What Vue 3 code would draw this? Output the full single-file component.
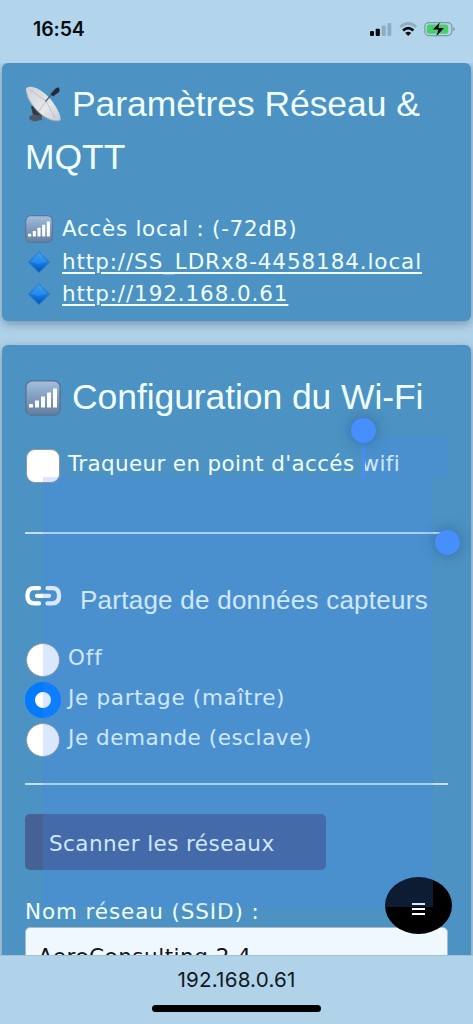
<script setup>
const links = ['http://SS_LDRx8-4458184.local', 'http://192.168.0.61']
const modes = [
  { label: 'Off', checked: false, fit: 'wide' },
  { label: 'Je partage (maître)', checked: true, fit: 'medium' },
  { label: 'Je demande (esclave)', checked: false, fit: 'snug' },
]
const bars = [
  { x: 4, y: 24, h: 3.5 },
  { x: 10, y: 20.5, h: 7 },
  { x: 16, y: 16.5, h: 11 },
  { x: 22, y: 12.5, h: 15 },
  { x: 28, y: 8.5, h: 19 },
]
</script>

<template>
  <div class="screen">
    <svg class="defs" width="0" height="0">
      <defs>
        <linearGradient id="tile" x1="0" y1="0" x2="0" y2="1">
          <stop offset="0" stop-color="#a3bfdd" />
          <stop offset=".5" stop-color="#7f9cbe" />
          <stop offset="1" stop-color="#627f9f" />
        </linearGradient>
        <linearGradient id="gem" x1="0" y1="0" x2="0" y2="1">
          <stop offset="0" stop-color="#3d9cf4" />
          <stop offset=".5" stop-color="#127ce5" />
          <stop offset="1" stop-color="#0756b6" />
        </linearGradient>
        <linearGradient id="dish" x1="0" y1="0" x2="1" y2="1">
          <stop offset="0" stop-color="#cfd2d8" />
          <stop offset=".6" stop-color="#e6e7ea" />
          <stop offset="1" stop-color="#c6cad1" />
        </linearGradient>
        <symbol id="signal" viewBox="0 0 36 36">
          <rect x=".8" y=".8" width="34.4" height="34.4" rx="6.5" fill="url(#tile)" stroke="#55789c" stroke-width="1.6" />
          <rect v-for="b in bars" :key="b.x" :x="b.x" :y="b.y" width="4" :height="b.h" rx=".5" fill="#fff" />
        </symbol>
      </defs>
    </svg>

    <header class="status">
      <span class="clock">16:54</span>
      <svg width="88" height="20" viewBox="0 0 88 20">
        <g fill="#050b10">
          <rect x="0" y="12" width="4" height="5" rx="1" />
          <rect x="5.7" y="9.8" width="4.2" height="7.2" rx="1" />
        </g>
        <g fill="#8facc0">
          <rect x="11.7" y="6.6" width="4" height="10.4" rx="1" />
          <rect x="17.5" y="4" width="3.8" height="13" rx="1" />
        </g>
        <g fill="none">
          <path d="M30.2 8.1Q38.2 .9 46.2 8.1" stroke="#8facc0" stroke-width="2.7" />
          <path d="M33 11.4Q38.2 6.8 43.4 11.4" stroke="#050b10" stroke-width="2.7" />
        </g>
        <path d="M35.2 14Q38.2 11.6 41.2 14L38.2 17Z" fill="#050b10" />
        <rect x="54.8" y="3.6" width="27" height="13" rx="4" fill="none" stroke="#799aa5" stroke-width="1.2" />
        <rect x="56.8" y="5.5" width="21.4" height="9.2" rx="2.2" fill="#43cf69" />
        <path d="M83.2 8v4.3q1.5-.5 1.5-2.15t-1.5-2.15" fill="#799aa5" />
        <path d="M70.5 2.2L61.8 11h6l-2 7.3 9.2-9.8h-6.2Z" fill="#050b10" stroke="#88d9a1" stroke-width=".7" />
      </svg>
    </header>

    <main class="page">
      <section class="card access">
        <h1 class="title">
          <svg class="glyph" width="36" height="36" viewBox="0 0 36 36">
            <path d="M6 20l6 0 5 8-1 5-8 1-2-3 2-2-1-4Z" fill="#343a43" />
            <path d="M4.5 30l5-1.5 7 1 .5 4.5-8 1.5-4.5-2Z" fill="#4d5968" />
            <path d="M1 4C0-1 11-1 21 8.5 30 17 36.500 29 35.400 34 32 37 20 33 12.500 25 5 17.500 1.500 11 1 4Z" fill="url(#dish)" />
            <path d="M1.300 5C3 13 7 19 12.500 25 20 33 31 36.500 35.400 34" fill="none" stroke="#a7adb7" stroke-width="1" />
            <path d="M5 4L21 15 30 32M21 15L14 25" fill="none" stroke="#b0b4bc" stroke-width=".7" />
            <path d="M20.500 15.500L26.500 8.500" stroke="#5b626d" stroke-width="1.300" />
            <path d="M25.500 8L30.500 2.500Q34 .5 34.500 3 35 6 32 7.500L28 10.500Z" fill="#252b34" />
          </svg>
          <span>Paramètres Réseau &amp;</span>
          <span class="title-rest">MQTT</span>
        </h1>
        <p class="line">
          <svg class="bullet" width="28" height="28"><use href="#signal" /></svg>
          <span class="local">Accès local : (-72dB)</span>
        </p>
        <p v-for="link in links" :key="link" class="line">
          <svg class="bullet" width="28" height="28" viewBox="0 0 28 28">
            <path d="M14 3.8L24.4 14.2 14 24.6 3.6 14.2Z" fill="url(#gem)" stroke="#2376bf" stroke-width=".8" />
            <path d="M14 5L23 14 14 16 5 14Z" fill="#4ba8fa" opacity=".3" />
          </svg>
          <a>{{ link }}</a>
        </p>
      </section>

      <section class="card wifi">
        <h2 class="title config">
          <svg class="glyph" width="36" height="36"><use href="#signal" /></svg>
          <span>Configuration du Wi-Fi</span>
        </h2>
        <label class="option ap"><i class="check"></i><span>Traqueur en point d'accés wifi</span></label>
        <hr class="rule" />
        <h3 class="share">
          <svg width="37" height="22" viewBox="0 0 37 22" fill="none" stroke="#fff" stroke-width="4.3" stroke-linecap="round">
            <path d="M14 3.2H9.2Q2.4 3.2 2.4 10.8T9.2 18.4H14" />
            <path d="M22.5 3.2H27.3Q34.1 3.2 34.1 10.8T27.3 18.4H22.5" />
            <path d="M12 10.8H24" />
          </svg>
          <span>Partage de données capteurs</span>
        </h3>
        <div class="modes">
          <label v-for="m in modes" :key="m.label" class="option" :class="m.fit">
            <i class="radio" :class="{ checked: m.checked }"></i><span>{{ m.label }}</span>
          </label>
        </div>
        <hr class="rule" />
        <button class="scan">Scanner les réseaux</button>
        <div class="field-label">Nom réseau (SSID) :</div>
        <div class="field">AeroConsulting 2.4</div>
      </section>
    </main>

    <div class="menu"><i></i><i></i><i></i></div>

    <div class="selection first"></div>
    <div class="selection rest"></div>
    <div class="caret"></div>
    <div class="handle start"></div>
    <div class="handle end"></div>

    <footer class="address">
      <span>192.168.0.61</span>
      <div class="home"></div>
    </footer>
  </div>
</template>

<style>
body { overflow: hidden; background: #b3d5eb; }
</style>

<style scoped>
* { box-sizing: border-box; }
.screen {
  position: relative;
  display: flex;
  flex-direction: column;
  width: 473px;
  height: 1024px;
  overflow: hidden;
  background: #b3d5eb;
  color: azure;
  font: 21.5px/32.5px "DejaVu Sans", Verdana, sans-serif;
  letter-spacing: .89px;
}
.defs { position: absolute; }
.status {
  display: flex;
  justify-content: space-between;
  flex: none;
  height: 63px;
  padding: 19px 15px 0 33px;
}
.clock {
  color: #050b10;
  font: 600 19.5px/21px Inter, sans-serif;
  letter-spacing: -.1px;
}
.page {
  display: flex;
  flex-direction: column;
  flex: none;
  gap: 24px;
  height: 892px;
  padding: 0 2px;
  overflow: hidden;
  background: #b0d2e9;
}
.card {
  flex: none;
  padding: 0 23px;
  border-radius: 6px;
  background: #4c92c3;
  box-shadow: 0 3px 10px rgba(60, 90, 120, .5);
}
.access { height: 257.5px; padding-top: 15px; }
.wifi { height: 700px; padding-top: 26px; }
.title {
  display: flex;
  flex-wrap: wrap;
  margin: 0;
  font: 400 35.5px/53px "Liberation Sans", Arial, sans-serif;
  letter-spacing: -.08px;
}
.glyph { flex: none; margin: 8px 11px 0 0; }
.title-rest { width: 100%; }
.access .title { margin-bottom: 28px; height: 106px; }
.line { display: flex; height: 32.5px; margin: 0; white-space: nowrap; }
.line span, .line a { margin-top: 1px; }
.local { letter-spacing: .7px; }
.bullet { flex: none; margin: 3px 9px 0 0; }
.line a { text-decoration: underline; text-decoration-thickness: 1.5px; text-underline-offset: 2.5px; }
.config { height: 53px; white-space: nowrap; }
.config .glyph { margin-top: 9px; }
.option { display: flex; align-items: center; height: 40px; white-space: nowrap; }
.option span { margin-top: -2px; }
.check, .radio {
  flex: none;
  width: 34px;
  height: 34px;
  margin: 0 8px 0 1px;
  border: 1.5px solid #8f97a3;
  background: #fff;
}
.check { border-radius: 9px; }
.radio { border-radius: 50%; }
.radio.checked {
  width: 36px;
  height: 36px;
  margin: 0 7px 0 0;
  border: 10.5px solid #007aff;
}
.medium { letter-spacing: .68px; }
.snug { letter-spacing: .55px; }
.ap { margin-top: 22px; letter-spacing: .34px; }
.ap span { margin-top: -3px; }
.rule { height: 2px; margin: 0; border: 0; background: #c3dff1; }
.ap + .rule { margin-top: 46px; }
.share {
  display: flex;
  gap: 18px;
  height: 40px;
  margin: 46px 0 0;
  font: 400 26px/40px "Liberation Sans", Arial, sans-serif;
  letter-spacing: .25px;
  white-space: nowrap;
}
.share svg { margin-top: 5px; }
.modes { margin: 20px 0 23px; }
.scan {
  display: block;
  width: 300.5px;
  height: 56px;
  margin: 29px 0 0;
  padding: 5px 0 0 24px;
  border: 0;
  border-radius: 5px;
  background: #456294;
  color: azure;
  font: inherit;
  letter-spacing: .42px;
  text-align: left;
}
.field-label { height: 57px; padding-top: 26px; }
.field {
  height: 60px;
  padding: 13px 12px;
  border: 1px solid #a9bac8;
  border-radius: 5px;
  background: aliceblue;
  color: #101418;
  letter-spacing: .5px;
}
.menu {
  position: absolute;
  left: 385px;
  top: 877px;
  display: flex;
  flex-direction: column;
  align-items: center;
  gap: 3px;
  width: 67px;
  height: 57px;
  padding-top: 26px;
  border-radius: 50%;
  background: #000;
}
.menu i { width: 13px; height: 2px; background: #fff; }
.selection { position: absolute; background: rgba(70, 140, 255, .2); }
.first { left: 363px; top: 437px; width: 85px; height: 40px; }
.rest { left: 43px; top: 477px; width: 390px; height: 430px; }
.caret { position: absolute; left: 362px; top: 440px; width: 3px; height: 38px; background: #468ffb; }
.handle {
  position: absolute;
  width: 25px;
  height: 25px;
  border-radius: 50%;
  background: #468ffc;
  box-shadow: 0 0 14px rgba(20, 60, 110, .45);
}
.start { left: 351px; top: 418px; }
.end { left: 435px; top: 530px; }
.address {
  display: flex;
  flex-direction: column;
  align-items: center;
  flex: none;
  height: 69px;
  padding-top: 11px;
  border-top: 1px solid #a3bfd2;
  background: #b0d3ea;
  color: #10191f;
  font: 400 20.6px/26px Inter, sans-serif;
  letter-spacing: .2px;
}
.home { width: 169px; height: 7px; margin-top: 12px; border-radius: 4px; background: #000; }
</style>
